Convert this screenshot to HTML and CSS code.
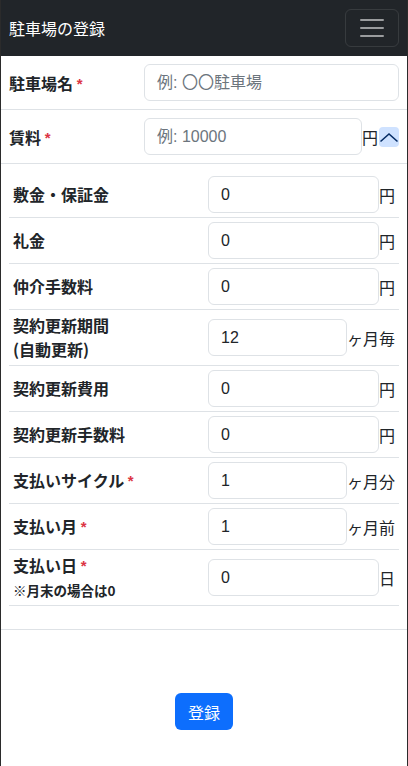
FILE: index.html
```html
<!DOCTYPE html>
<html lang="ja">
<head>
<meta charset="utf-8">
<title>駐車場の登録</title>
<link rel="stylesheet" href="styles.css">
</head>
<body>
<div class="frame">
  <nav class="navbar">
    <span class="brand">駐車場の登録</span>
    <button class="toggler" type="button" aria-label="menu">
      <svg viewBox="0 0 30 30" width="30" height="30"><path d="M4 7h22M4 15h22M4 23h22" stroke="rgba(255,255,255,0.55)" stroke-width="2" stroke-linecap="round" fill="none"/></svg>
    </button>
  </nav>
  <form class="form">
    <table class="outer">
      <tr>
        <th>駐車場名 <span class="req">*</span></th>
        <td><input class="field" placeholder="例: 〇〇駐車場"></td>
      </tr>
      <tr>
        <th>賃料 <span class="req">*</span></th>
        <td>
          <div class="group">
            <input class="field" placeholder="例: 10000">
            <span class="unit">円</span>
            <button class="chev" type="button" aria-label="collapse">
              <svg viewBox="0 0 20 20" width="20" height="20"><path d="M1.5 14.5L10 7L18.5 14.5" stroke="#052c65" stroke-width="1.6" fill="none"/></svg>
            </button>
          </div>
        </td>
      </tr>
      <tr>
        <td colspan="2" class="nested">
          <table class="inner">
            <tr><th>敷金・保証金</th><td><div class="group"><input class="field" value="0"><span class="unit">円</span></div></td></tr>
            <tr><th>礼金</th><td><div class="group"><input class="field" value="0"><span class="unit">円</span></div></td></tr>
            <tr><th>仲介手数料</th><td><div class="group"><input class="field" value="0"><span class="unit">円</span></div></td></tr>
            <tr class="tall"><th>契約更新期間<br>(自動更新)</th><td><div class="group"><input class="field" value="12"><span class="unit">ヶ月毎</span></div></td></tr>
            <tr><th>契約更新費用</th><td><div class="group"><input class="field" value="0"><span class="unit">円</span></div></td></tr>
            <tr><th>契約更新手数料</th><td><div class="group"><input class="field" value="0"><span class="unit">円</span></div></td></tr>
            <tr><th>支払いサイクル <span class="req">*</span></th><td><div class="group"><input class="field" value="1"><span class="unit">ヶ月分</span></div></td></tr>
            <tr><th>支払い月 <span class="req">*</span></th><td><div class="group"><input class="field" value="1"><span class="unit">ヶ月前</span></div></td></tr>
            <tr class="tall"><th>支払い日 <span class="req">*</span><br><span class="note">※月末の場合は0</span></th><td><div class="group"><input class="field" value="0"><span class="unit">日</span></div></td></tr>
          </table>
        </td>
      </tr>
    </table>
    <div class="actions">
      <button class="submit" type="submit">登録</button>
    </div>
  </form>
</div>
</body>
</html>
```
FILE: styles.css
```css
* {
  box-sizing: border-box;
}

body {
  margin: 0;
  background: #fff;
  color: #212529;
  font-family: "Liberation Sans", "Noto Sans CJK JP", sans-serif;
}

.frame {
  width: 408px;
  min-height: 766px;
  border-left: 1px solid #2b2b2b;
  border-right: 1px solid #2b2b2b;
}

.navbar {
  height: 56px;
  background: #212529;
  display: flex;
  align-items: center;
  justify-content: space-between;
  padding: 0 8px;
}

.brand {
  color: #fff;
  font-family: "Noto Sans CJK JP", sans-serif;
  font-size: 16px;
}

.toggler {
  width: 54px;
  height: 38px;
  padding: 0;
  background: transparent;
  border: 1px solid rgba(255, 255, 255, 0.1);
  border-radius: 6px;
  display: flex;
  align-items: center;
  justify-content: center;
}

.toggler svg {
  display: block;
}

.outer,
.inner {
  width: 100%;
  border-collapse: collapse;
}

.outer > tbody > tr > th,
.outer > tbody > tr > td {
  padding: 8px;
  border-bottom: 1px solid #dee2e6;
  vertical-align: middle;
}

.outer > tbody > tr > th {
  width: 135px;
  text-align: left;
  font-family: "Noto Sans CJK JP", sans-serif;
  font-weight: 700;
  font-size: 16px;
}

.inner {
  margin-bottom: 15px;
}

.inner th,
.inner td {
  padding: 4px;
  border-bottom: 1px solid #dee2e6;
  vertical-align: middle;
}

.inner th {
  width: 50%;
  text-align: left;
  font-family: "Noto Sans CJK JP", sans-serif;
  font-weight: 700;
  font-size: 16px;
  line-height: 23.5px;
}

.note {
  font-size: 13.5px;
  line-height: 1;
}

.req {
  color: #dc3545;
  font-family: "Liberation Sans", sans-serif;
  font-size: 15px;
  line-height: 1;
  position: relative;
  top: -1px;
}

.group {
  display: flex;
  align-items: center;
}

.field {
  width: 100%;
  min-width: 0;
  height: 37px;
  padding: 0 12px;
  border: 1px solid #dee2e6;
  border-radius: 6px;
  font-family: "Liberation Sans", "Noto Sans CJK JP", sans-serif;
  font-size: 16px;
  color: #212529;
  background: #fff;
}

.group .field {
  flex: 1;
}

.field::placeholder {
  color: #6c757d;
}

.unit {
  font-family: "Noto Sans CJK JP", sans-serif;
  font-size: 16px;
  white-space: nowrap;
}

.chev {
  width: 20px;
  height: 20px;
  padding: 0;
  margin-left: 1px;
  border: none;
  border-radius: 4px;
  background: #cfe2ff;
  display: flex;
  align-items: center;
  justify-content: center;
}

.chev svg {
  display: block;
}

.actions {
  display: flex;
  justify-content: center;
  padding-top: 63px;
}

.submit {
  height: 37px;
  padding: 0 12.5px;
  border: none;
  border-radius: 6px;
  background: #0d6efd;
  color: #fff;
  font-family: "Noto Sans CJK JP", sans-serif;
  font-size: 16px;
}
```
